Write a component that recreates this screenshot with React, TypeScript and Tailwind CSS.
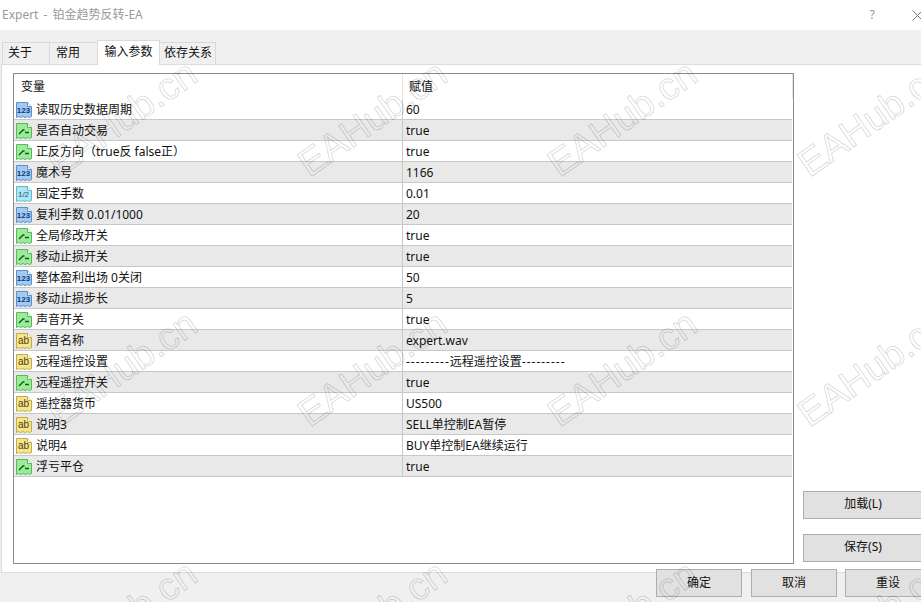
import React from "react";

type Kind = "int" | "bool" | "float" | "str";

const rows: { kind: Kind; name: string; value: React.ReactNode }[] = [
  { kind: "int", name: "读取历史数据周期", value: "60" },
  { kind: "bool", name: "是否自动交易", value: "true" },
  { kind: "bool", name: "正反方向（true反 false正）", value: "true" },
  { kind: "int", name: "魔术号", value: "1166" },
  { kind: "float", name: "固定手数", value: "0.01" },
  { kind: "int", name: "复利手数 0.01/1000", value: "20" },
  { kind: "bool", name: "全局修改开关", value: "true" },
  { kind: "bool", name: "移动止损开关", value: "true" },
  { kind: "int", name: "整体盈利出场 0关闭", value: "50" },
  { kind: "int", name: "移动止损步长", value: "5" },
  { kind: "bool", name: "声音开关", value: "true" },
  { kind: "str", name: "声音名称", value: "expert.wav" },
  {
    kind: "str",
    name: "远程遥控设置",
    value: (
      <>
        <span className="tracking-[1px]">---------</span>远程遥控设置<span className="tracking-[1px]">---------</span>
      </>
    ),
  },
  { kind: "bool", name: "远程遥控开关", value: "true" },
  { kind: "str", name: "遥控器货币", value: "US500" },
  { kind: "str", name: "说明3", value: "SELL单控制EA暂停" },
  { kind: "str", name: "说明4", value: "BUY单控制EA继续运行" },
  { kind: "bool", name: "浮亏平仓", value: "true" },
];

const palette: Record<Kind, { fill: string; edge: string; ink: string; label: string }> = {
  int: { fill: "#a3caf2", edge: "#5a90cc", ink: "#0e3a78", label: "123" },
  bool: { fill: "#9fe99f", edge: "#55bb55", ink: "#06660a", label: "" },
  float: { fill: "#aee6f2", edge: "#5fb8cf", ink: "#0f5a78", label: "1/2" },
  str: { fill: "#f5e68e", edge: "#c4aa4a", ink: "#4f400c", label: "ab" },
};

function TypeIcon({ kind }: { kind: Kind }) {
  const c = palette[kind];
  return (
    <svg width="16" height="16" viewBox="0 0 16 16" className="shrink-0 mt-px">
      <path
        d="M0.5 0.5H11.5L15.5 4.5V14.5L13.5 15.5L11.5 14.5L9 15.5L7 14.5L4.5 15.5L2.5 14.5L0.5 15.5Z"
        fill={c.fill}
        stroke={c.edge}
      />
      <path d="M11.5 0.5V4.5H15.5" fill="#ffffff" stroke={c.edge} />
      {kind === "bool" ? (
        <path d="M3 11L7 7H8.5M9 9.5H13" fill="none" stroke={c.ink} strokeWidth="1.4" />
      ) : (
        <text
          x="7.5"
          y={kind === "str" ? 11 : 11}
          textAnchor="middle"
          fill={c.ink}
          fontSize={kind === "str" ? 10 : 8}
          fontWeight={kind === "int" ? 700 : 400}
          fontFamily="'Liberation Sans', sans-serif"
        >
          {c.label}
        </text>
      )}
    </svg>
  );
}

const marks = [
  "left-[63px] top-[145px]",
  "left-[313px] top-[145px]",
  "left-[563px] top-[145px]",
  "left-[813px] top-[145px]",
  "left-[63px] top-[395px]",
  "left-[313px] top-[395px]",
  "left-[563px] top-[395px]",
  "left-[813px] top-[395px]",
  "left-[63px] top-[645px]",
  "left-[313px] top-[645px]",
  "left-[563px] top-[645px]",
  "left-[813px] top-[645px]",
];

function Tab({ label, active, className }: { label: string; active?: boolean; className: string }) {
  if (active) {
    return (
      <div className={`${className} h-[25px] -mb-px z-10 pb-[2px] bg-white border border-b-0 border-[#d9d9d9] flex items-center justify-center`}>
        {label}
      </div>
    );
  }
  return (
    <div className={`${className} h-[22px] pb-[2px] bg-[#f0f0f0] border border-b-0 border-[#d9d9d9] -ml-px flex items-center`}>
      {label}
    </div>
  );
}

function Btn({ label, className }: { label: string; className: string }) {
  return (
    <div className={`${className} h-[28px] shrink-0 bg-[#e1e1e1] border border-[#adadad] flex items-center justify-center text-[#111]`}>
      {label}
    </div>
  );
}

export default function App() {
  return (
    <div className="relative w-[921px] h-[602px] overflow-hidden bg-[#f0f0f0] text-[12px] text-[#111] font-['Noto_Sans','Noto_Sans_CJK_SC',sans-serif]">
      {/* title bar */}
      <div className="h-[30px] bg-white flex items-center text-[#9a9a9a] pl-[2px]">
        <span className="[word-spacing:2px]">Expert - 铂金趋势反转-EA</span>
        <span className="ml-auto mr-[37px]">?</span>
        <svg width="11" height="11" viewBox="0 0 11 11" className="-mr-[2px]">
          <path d="M0.5 0.5L10.5 10.5M10.5 0.5L0.5 10.5" stroke="#777" fill="none" />
        </svg>
      </div>

      {/* tabs */}
      <div className="h-[34px] pl-[3px] flex items-end">
        <Tab label="关于" className="w-[48px] pl-[5px]" />
        <Tab label="常用" className="w-[49px] pl-[6px]" />
        <Tab label="输入参数" className="w-[63px] -ml-px" active />
        <Tab label="依存关系" className="w-[57px] pl-[4px]" />
      </div>

      {/* main panel */}
      <div className="ml-px h-[509px] bg-white border-t border-l border-b border-[#dcdcdc] flex">
        <div className="ml-[11px] mt-[8px] w-[781px] h-[491px] shrink-0 border border-[#8c8c8c]">
          <div className="h-[25px] flex items-center">
            <div className="w-[389px] h-full pl-[7px] flex items-center border-r border-[#e6e6e6]">变量</div>
            <div className="flex-1 h-full pl-[6px] flex items-center border-r border-[#e6e6e6]">赋值</div>
          </div>
          {rows.map((r, i) => (
            <div
              key={r.name}
              className={`h-[21px] flex items-center border-b border-[#c8c8c8] mr-px ${i % 2 ? "bg-[#e9e9e9]" : "bg-white"}`}
            >
              <div className="w-[389px] h-full pl-[2px] flex items-center gap-[4px] border-r border-[#c8c8c8] whitespace-pre">
                <TypeIcon kind={r.kind} />
                <span className="mt-[2px]">{r.name}</span>
              </div>
              <div className="pl-[3px] mt-[2px]">{r.value}</div>
            </div>
          ))}
        </div>
        <div className="ml-[9px] pb-[10px] flex flex-col justify-end gap-[15px]">
          <Btn label="加载(L)" className="w-[120px] pb-[2px]" />
          <Btn label="保存(S)" className="w-[120px] pb-[2px]" />
        </div>
      </div>

      {/* footer buttons */}
      <div className="-mt-[4px] pl-[656px] flex gap-[8px]">
        <Btn label="确定" className="w-[86px]" />
        <Btn label="取消" className="w-[86px] ml-px" />
        <Btn label="重设" className="w-[86px]" />
      </div>

      {/* watermark */}
      <div className="absolute inset-0 overflow-hidden pointer-events-none">
        {marks.map((m) => (
          <div
            key={m}
            className={`absolute ${m} origin-bottom-left -rotate-[35deg] whitespace-nowrap text-[38px] leading-[38px] text-transparent font-['Liberation_Sans',sans-serif] [-webkit-text-stroke:1px_rgba(0,0,0,0.16)]`}
          >
            EAHub.cn
          </div>
        ))}
      </div>
    </div>
  );
}
